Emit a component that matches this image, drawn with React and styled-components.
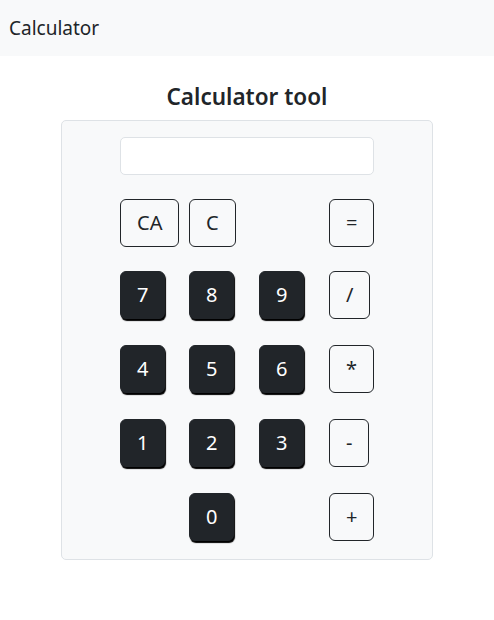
import styled, { createGlobalStyle } from "styled-components";

const keys = [
  { label: "CA", col: 1, kind: "outline" },
  { label: "C", col: 2, kind: "outline" },
  { label: "=", col: 4, kind: "outline" },
  { label: "7", col: 1, kind: "dark" },
  { label: "8", col: 2, kind: "dark" },
  { label: "9", col: 3, kind: "dark" },
  { label: "/", col: 4, kind: "outline" },
  { label: "4", col: 1, kind: "dark" },
  { label: "5", col: 2, kind: "dark" },
  { label: "6", col: 3, kind: "dark" },
  { label: "*", col: 4, kind: "outline" },
  { label: "1", col: 1, kind: "dark" },
  { label: "2", col: 2, kind: "dark" },
  { label: "3", col: 3, kind: "dark" },
  { label: "-", col: 4, kind: "outline" },
  { label: "0", col: 2, kind: "dark" },
  { label: "+", col: 4, kind: "outline" },
];

const App = () => {
  return (
    <>
      <Global />
      <Navbar>
        <Brand>Calculator</Brand>
      </Navbar>
      <Title>Calculator tool</Title>
      <Card>
        <Inner>
          <Display type="text" readOnly />
          <Keys>
            {keys.map((k, i) => (
              <Key key={i} $col={k.col} $dark={k.kind === "dark"}>
                {k.label}
              </Key>
            ))}
          </Keys>
        </Inner>
      </Card>
    </>
  );
};

const Global = createGlobalStyle`
  body {
    margin: 0;
    background: #fff;
    color: #212529;
    font-family: "Noto Sans", "Open Sans", sans-serif;
  }
`;

const Navbar = styled.nav`
  height: 56px;
  background: #f8f9fa;
  display: flex;
  align-items: center;
  padding: 0 9px;
`;

const Brand = styled.span`
  font-size: 19px;
  color: #212529;
`;

const Title = styled.h3`
  margin: 27px 0 10px;
  font-size: 22.5px;
  font-weight: 600;
  line-height: 27px;
  text-align: center;
`;

const Card = styled.div`
  width: 372px;
  box-sizing: border-box;
  margin: 0 auto;
  background: #f8f9fa;
  border: 1px solid #dee2e6;
  border-radius: 5px;
  padding: 16px 0;
`;

const Inner = styled.div`
  width: 254px;
  margin: 0 auto;
`;

const Display = styled.input`
  display: block;
  width: 100%;
  height: 38px;
  box-sizing: border-box;
  border: 1px solid #dee2e6;
  border-radius: 5px;
  background: #fff;
  outline: none;
  margin-bottom: 24px;
`;

const Keys = styled.div`
  display: grid;
  grid-template-columns: 69px 70px 70px 1fr;
  row-gap: 24px;
  align-items: start;
  justify-items: start;
`;

const Key = styled.button`
  grid-column: ${(p) => p.$col};
  height: 48px;
  padding: 0 16px;
  font-family: inherit;
  font-size: 20px;
  font-weight: 400;
  line-height: 30px;
  border-radius: 6px;
  border: 1px solid #212529;
  background: ${(p) => (p.$dark ? "#212529" : "transparent")};
  color: ${(p) => (p.$dark ? "#fff" : "#212529")};
  box-shadow: ${(p) => (p.$dark ? "1px 2px 1px #000" : "none")};
  margin-bottom: ${(p) => (p.$dark ? "2px" : "0")};
  cursor: pointer;
`;

export default App;
